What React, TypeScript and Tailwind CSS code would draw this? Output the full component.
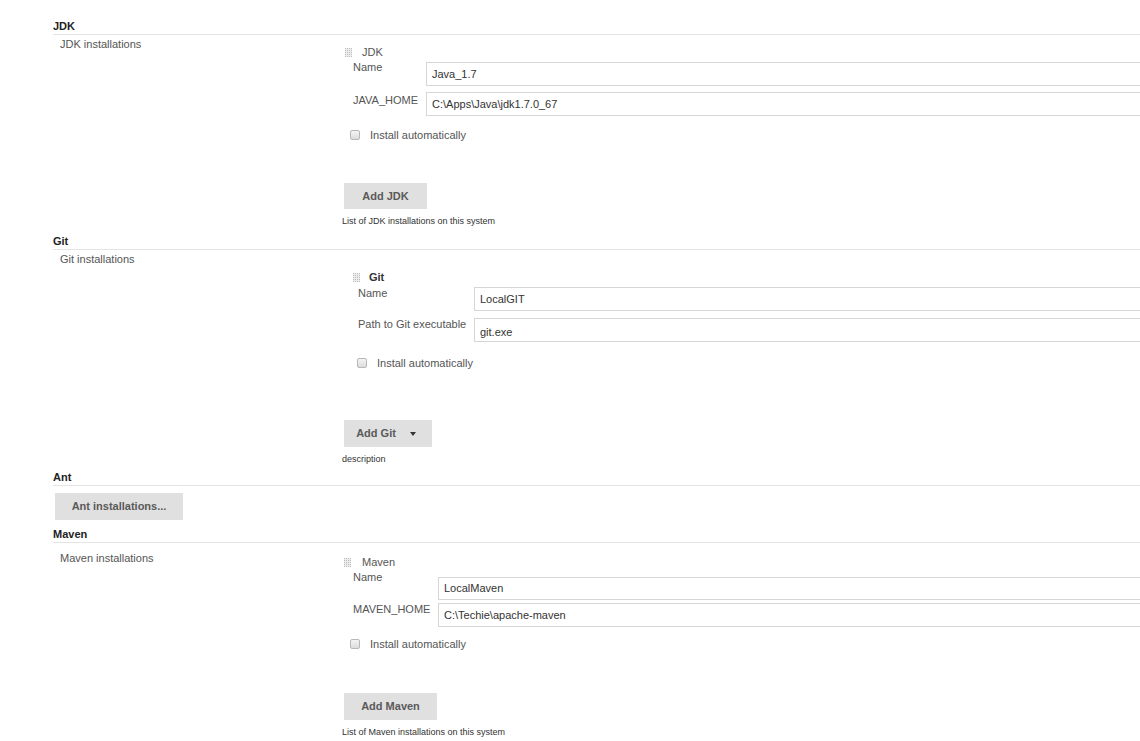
import React from "react";

function GridIcon() {
    const dots: React.ReactNode[] = [];
    for (let y = 0; y < 5; y++) {
        for (let x = 0; x < 4; x++) {
            dots.push(<rect key={`${x}-${y}`} x={x * 2} y={y * 2} width="1" height="1" fill="#bdbdbd" />);
        }
    }
    return (
        <svg width="8" height="9" viewBox="0 0 8 9" className="shrink-0">
            <rect x="0" y="0" width="7" height="9" fill="#ececec" />
            {dots}
        </svg>
    );
}

function SectionHeader({ title }: { title: string }) {
    return (
        <div className="ml-[53px] h-[17px] border-b border-[#e4e4e4] text-[11px] font-bold leading-[16px] text-[#222]">
            {title}
        </div>
    );
}

function Field({
    label,
    value,
    rowCls,
    labelCls,
    inputCls,
}: {
    label: string;
    value: string;
    rowCls: string;
    labelCls: string;
    inputCls: string;
}) {
    return (
        <div className={`flex items-start ${rowCls}`}>
            <div className={`shrink-0 text-[11px] leading-[14px] text-[#555] ${labelCls}`}>{label}</div>
            <div
                className={`flex flex-1 items-center border border-[#d6d6d6] bg-white pl-[5px] text-[11px] text-[#333] ${inputCls}`}
            >
                {value}
            </div>
        </div>
    );
}

function Checkbox({ cls }: { cls: string }) {
    return (
        <div className={`flex h-[14px] items-center gap-[10px] ${cls}`}>
            <span className="ml-[7px] h-[10px] w-[10px] rounded-[2px] border border-[#b8b8b8] bg-gradient-to-b from-[#f4f4f4] to-[#dcdcdc]" />
            <span className="text-[11px] leading-[14px] text-[#555]">Install automatically</span>
        </div>
    );
}

function GrayButton({ cls, children }: { cls: string; children: React.ReactNode }) {
    return (
        <div
            className={`flex items-center justify-center bg-[#e0e0e0] text-[11px] font-bold text-[#5a5a5a] ${cls}`}
        >
            {children}
        </div>
    );
}

export default function App() {
    return (
        <div className="min-h-screen w-full overflow-hidden bg-white font-['Liberation_Sans',Arial,sans-serif]">
            <div className="w-[1200px] pt-[18px]">
                {/* JDK */}
                <SectionHeader title="JDK" />
                <div className="flex pb-[6px]">
                    <div className="w-[343px] shrink-0 pl-[60px] pt-[3px] text-[11px] leading-[13px] text-[#555]">
                        JDK installations
                    </div>
                    <div className="flex flex-1 flex-col">
                        <div className="mt-[10px] flex h-[14px] items-center">
                            <span className="ml-[2px]"><GridIcon /></span>
                            <span className="ml-[9px] text-[11px] leading-[14px] text-[#555]">JDK</span>
                        </div>
                        <Field
                            label="Name"
                            value="Java_1.7"
                            rowCls="mt-0"
                            labelCls="w-[83px] pl-[10px] pt-[1px]"
                            inputCls="mt-[3px] h-[24px]"
                        />
                        <Field
                            label="JAVA_HOME"
                            value="C:\Apps\Java\jdk1.7.0_67"
                            rowCls="mt-[4px]"
                            labelCls="w-[83px] pl-[10px] pt-[3px]"
                            inputCls="mt-[2px] h-[24px]"
                        />
                        <Checkbox cls="mt-[12px]" />
                        <GrayButton cls="ml-[1px] mt-[41px] h-[26px] w-[83px]">Add JDK</GrayButton>
                        <div className="-ml-[1px] mt-[7px] text-[9px] leading-[11px] text-[#333]">
                            List of JDK installations on this system
                        </div>
                    </div>
                </div>

                {/* Git */}
                <SectionHeader title="Git" />
                <div className="flex pb-[4px]">
                    <div className="w-[343px] shrink-0 pl-[60px] pt-[3px] text-[11px] leading-[13px] text-[#555]">
                        Git installations
                    </div>
                    <div className="flex flex-1 flex-col">
                        <div className="ml-[7px] flex flex-col">
                            <div className="mt-[20px] flex h-[14px] items-center">
                                <span className="ml-[3px]"><GridIcon /></span>
                                <span className="ml-[8px] text-[11px] font-bold leading-[14px] text-[#333]">Git</span>
                            </div>
                            <Field
                                label="Name"
                                value="LocalGIT"
                                rowCls="mt-0"
                                labelCls="w-[124px] pl-[8px] pt-[2px]"
                                inputCls="mt-[3px] h-[24px]"
                            />
                            <Field
                                label="Path to Git executable"
                                value="git.exe"
                                rowCls="mt-[6px]"
                                labelCls="w-[124px] pl-[8px] pt-0"
                                inputCls="mt-[1px] h-[24px] pt-[4px]"
                            />
                            <Checkbox cls="mt-[14px]" />
                        </div>
                        <GrayButton cls="ml-[1px] mt-[50px] h-[27px] w-[88px]">
                            <span className="ml-[-4px]">Add Git</span>
                            <svg width="6" height="4" viewBox="0 0 6 4" className="ml-[14px]">
                                <path d="M0 0 L6 0 L3 4 Z" fill="#333" />
                            </svg>
                        </GrayButton>
                        <div className="-ml-[1px] mt-[7px] text-[9px] leading-[11px] text-[#333]">description</div>
                    </div>
                </div>

                {/* Ant */}
                <SectionHeader title="Ant" />
                <GrayButton cls="ml-[55px] mt-[7px] h-[27px] w-[128px]">Ant installations...</GrayButton>

                {/* Maven */}
                <div className="mt-[6px]">
                    <SectionHeader title="Maven" />
                </div>
                <div className="flex">
                    <div className="w-[343px] shrink-0 pl-[60px] pt-[9px] text-[11px] leading-[13px] text-[#555]">
                        Maven installations
                    </div>
                    <div className="flex flex-1 flex-col">
                        <div className="mt-[12px] flex h-[14px] items-center">
                            <span className="ml-[1px]"><GridIcon /></span>
                            <span className="ml-[10px] text-[11px] leading-[14px] text-[#555]">Maven</span>
                        </div>
                        <Field
                            label="Name"
                            value="LocalMaven"
                            rowCls="mt-0"
                            labelCls="w-[95px] pl-[10px] pt-[1px]"
                            inputCls="mt-[8px] h-[23px]"
                        />
                        <Field
                            label="MAVEN_HOME"
                            value="C:\Techie\apache-maven"
                            rowCls="mt-0"
                            labelCls="w-[95px] pl-[10px] pt-[2px]"
                            inputCls="mt-[3px] h-[24px]"
                        />
                        <Checkbox cls="mt-[10px]" />
                        <GrayButton cls="ml-[1px] mt-[42px] h-[27px] w-[93px]">Add Maven</GrayButton>
                        <div className="-ml-[1px] mt-[7px] text-[9px] leading-[11px] text-[#333]">
                            List of Maven installations on this system
                        </div>
                    </div>
                </div>
            </div>
        </div>
    );
}
